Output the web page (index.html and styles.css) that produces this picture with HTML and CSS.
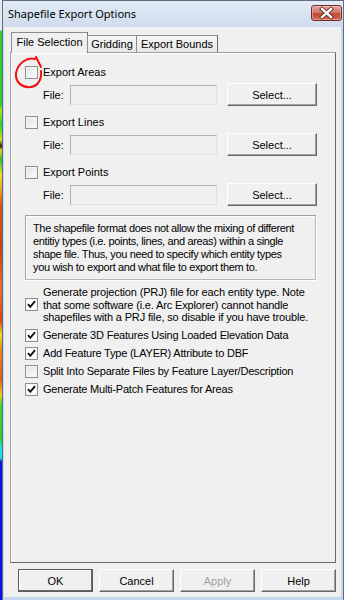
FILE: index.html
```html
<!DOCTYPE html>
<html>
<head>
<meta charset="utf-8">
<link rel="stylesheet" href="styles.css">
</head>
<body>
<div class="screen">
  <div class="strip"></div>
  <div class="window">
    <div class="titlebar">
      <span class="title">Shapefile Export Options</span>
      <span class="close">
        <svg width="31" height="16" viewBox="0 0 31 16">
          <path d="M11 4 L20 12 M20 4 L11 12" stroke="#5a1c14" stroke-width="4" stroke-linecap="square" fill="none"/>
          <path d="M11 4 L20 12 M20 4 L11 12" stroke="#ffffff" stroke-width="2.4" stroke-linecap="square" fill="none"/>
        </svg>
      </span>
    </div>
    <div class="client">
      <div class="tabs">
        <div class="tab active t1">File Selection</div>
        <div class="tab t2">Gridding</div>
        <div class="tab t3">Export Bounds</div>
      </div>
      <div class="panel">
        <div class="section">
          <div class="cbrow"><span class="cb"></span><span>Export Areas</span></div>
          <div class="filerow"><span class="flabel">File:</span><span class="input"></span><span class="btn sel">Select...</span></div>
        </div>
        <div class="section">
          <div class="cbrow"><span class="cb"></span><span>Export Lines</span></div>
          <div class="filerow"><span class="flabel">File:</span><span class="input"></span><span class="btn sel">Select...</span></div>
        </div>
        <div class="section">
          <div class="cbrow"><span class="cb"></span><span>Export Points</span></div>
          <div class="filerow"><span class="flabel">File:</span><span class="input"></span><span class="btn sel">Select...</span></div>
        </div>
        <div class="info">The shapefile format does not allow the mixing of different<br>entitiy types (i.e. points, lines, and areas) within a single<br>shape file. Thus, you need to specify which entity types<br>you wish to export and what file to export them to.</div>
        <div class="cbrow multi">
          <span class="cb on"><svg width="11" height="11" viewBox="0 0 11 11"><path d="M2 5.2 L4.3 7.8 L9 2.2" stroke="#111" stroke-width="1.9" fill="none"/></svg></span>
          <span class="mtext">Generate projection (PRJ) file for each entity type. Note that some software (i.e. Arc Explorer) cannot handle shapefiles with a PRJ file, so disable if you have trouble.</span>
        </div>
        <div class="opts">
          <div class="cbrow"><span class="cb on"><svg width="11" height="11" viewBox="0 0 11 11"><path d="M2 5.2 L4.3 7.8 L9 2.2" stroke="#111" stroke-width="1.9" fill="none"/></svg></span><span>Generate 3D Features Using Loaded Elevation Data</span></div>
          <div class="cbrow"><span class="cb on"><svg width="11" height="11" viewBox="0 0 11 11"><path d="M2 5.2 L4.3 7.8 L9 2.2" stroke="#111" stroke-width="1.9" fill="none"/></svg></span><span>Add Feature Type (LAYER) Attribute to DBF</span></div>
          <div class="cbrow"><span class="cb"></span><span>Split Into Separate Files by Feature Layer/Description</span></div>
          <div class="cbrow"><span class="cb on"><svg width="11" height="11" viewBox="0 0 11 11"><path d="M2 5.2 L4.3 7.8 L9 2.2" stroke="#111" stroke-width="1.9" fill="none"/></svg></span><span>Generate Multi-Patch Features for Areas</span></div>
        </div>
      </div>
      <div class="buttons">
        <span class="btn def">OK</span>
        <span class="btn">Cancel</span>
        <span class="btn dis">Apply</span>
        <span class="btn">Help</span>
      </div>
    </div>
  </div>
  <svg class="annot" width="44" height="44" viewBox="0 0 44 44">
    <path d="M33 1 L38 11" stroke="#f01010" stroke-width="2" fill="none" stroke-linecap="round"/>
    <path d="M32 3 C24 1 15 7 13 17 C12 27 20 32 28 31 C35 30 39 23 38 15" stroke="#f01010" stroke-width="2" fill="none" stroke-linecap="round"/>
  </svg>
</div>
</body>
</html>
```

FILE: styles.css
```css
* { box-sizing: border-box; }
html, body { margin: 0; padding: 0; }
body { background: #f0f0f0; font-family: "Liberation Sans", Arial, sans-serif; font-size: 11px; color: #000; }

.screen { position: relative; width: 344px; height: 600px; display: flex; overflow: hidden; }

.strip {
  width: 2px; height: 600px; flex: none;
  background: linear-gradient(to bottom,
    #e8e8e8 0, #e8e8e8 30px, #2bd12b 31px, #2bd12b 105px, #b8e020 110px, #2bd12b 125px,
    #e0e020 140px, #3a1010 146px, #e6d020 150px, #30c030 160px, #f0e020 175px, #f0a020 190px,
    #e05010 205px, #d04010 250px, #f07020 290px, #e04010 320px, #f0e020 335px, #f08020 350px,
    #e06010 380px, #f0d020 395px, #40d030 405px, #30d030 440px, #20e0e0 448px, #20e0e0 458px,
    #1010e0 462px, #1010e0 600px);
}

.window {
  width: 342px; height: 600px; flex: none;
  background: #c4d6ee;
  border: 1px solid #5d6f86; border-bottom: none;
  display: flex; flex-direction: column;
}

.titlebar {
  height: 26px; flex: none;
  background: linear-gradient(to bottom, #e2ebf6, #cfdcee);
  display: flex; justify-content: space-between; align-items: flex-start;
  padding: 0 1px 0 5px;
}
.title { font-family: "Noto Sans", "Open Sans", sans-serif; font-size: 11px; line-height: 16px; margin-top: 5px; color: #000; }
.close {
  width: 31px; height: 16px; margin-top: 4px;
  border: 1px solid #7a2a20; border-radius: 3px;
  background: linear-gradient(to bottom, #e2a196 0, #d27b6c 45%, #c24a36 55%, #cf6a52 100%);
  box-shadow: inset 0 0 0 1px rgba(255,255,255,0.35);
  position: relative;
}
.close svg { position: absolute; left: -1px; top: -1px; }

.client {
  flex: none; height: 570px;
  margin: 0 2px 0 1px;
  background: #f0f0f0;
  padding: 5px 5px 0 6px;
}

.tabs { display: flex; align-items: flex-end; height: 20px; padding-left: 1px; position: relative; z-index: 2; }
.tab {
  height: 17px; line-height: 15px; text-align: center;
  border: 1px solid #898c95; border-bottom: none;
  border-right-color: #6a6a6a;
  background: linear-gradient(to bottom, #f5f5f5, #e8e8e8);
  color: #000;
}
.tab.t1 { width: 77px; }
.tab.t2 { width: 50px; margin-left: -1px; padding-top: 1px; }
.tab.t3 { width: 82px; margin-left: -1px; padding-top: 1px; }
.tab.active { height: 21px; margin-bottom: -1px; background: #f0f0f0; line-height: 18px; padding-top: 0; }

.panel {
  height: 511px;
  border: 1px solid #a0a0a0; border-right-color: #696969; border-bottom-color: #696969;
  box-shadow: inset 1px 1px 0 #fff;
  padding: 12px 0 0 14px;
  position: relative; z-index: 1;
}

.section { margin-bottom: 9px; }
.cbrow { display: flex; align-items: center; height: 15px; line-height: 15px; white-space: nowrap; }
.cb {
  width: 13px; height: 13px; flex: none; margin-right: 5px;
  border: 1px solid #8e8f8f;
  background: linear-gradient(135deg, #e4e4e4, #fafafa);
  box-shadow: inset 0 0 0 1px #f4f4f4;
  display: flex; align-items: center; justify-content: center;
}
.cb.on { background: #fff; }

.filerow { display: flex; align-items: center; height: 23px; margin-top: 3px; padding-left: 18px; }
.flabel { width: 27px; }
.input {
  width: 147px; height: 20px;
  border: 1px solid; border-color: #b0b0b0 #e2e2e2 #e2e2e2 #b0b0b0;
  background: #f0f0f0;
}

.btn {
  display: flex; align-items: center; justify-content: center;
  height: 23px; width: 75px;
  border: 1px solid; border-color: #ffffff #696969 #696969 #ffffff;
  box-shadow: inset -1px -1px 0 #a0a0a0;
  background: #f0f0f0; color: #000;
}
.btn.sel { width: 90px; margin-left: 10px; }

.info {
  width: 291px; height: 65px; margin-top: 8px;
  border: 1px solid #a0a0a0; border-right-color: #b8b8b8; border-bottom-color: #b8b8b8;
  box-shadow: 1px 1px 0 #fff, inset 1px 1px 0 #fff;
  padding: 6px 7px;
  line-height: 13px;
  letter-spacing: -0.35px;
  white-space: nowrap;
}

.cbrow.multi { height: auto; white-space: normal; margin-top: 6px; width: 300px; }
.mtext { line-height: 12.5px; letter-spacing: -0.15px; width: 272px; }

.opts { margin-top: 4px; display: flex; flex-direction: column; gap: 3px; letter-spacing: -0.2px; }

.buttons { display: flex; gap: 6px; margin-top: 6px; padding-left: 8px; }
.btn.def { border: 1px solid #5a5a5a; box-shadow: inset -1px -1px 0 #696969, inset 1px 1px 0 #fff; }
.btn.dis { color: #a0a0a0; }

.annot { position: absolute; left: 3px; top: 56px; }
```
